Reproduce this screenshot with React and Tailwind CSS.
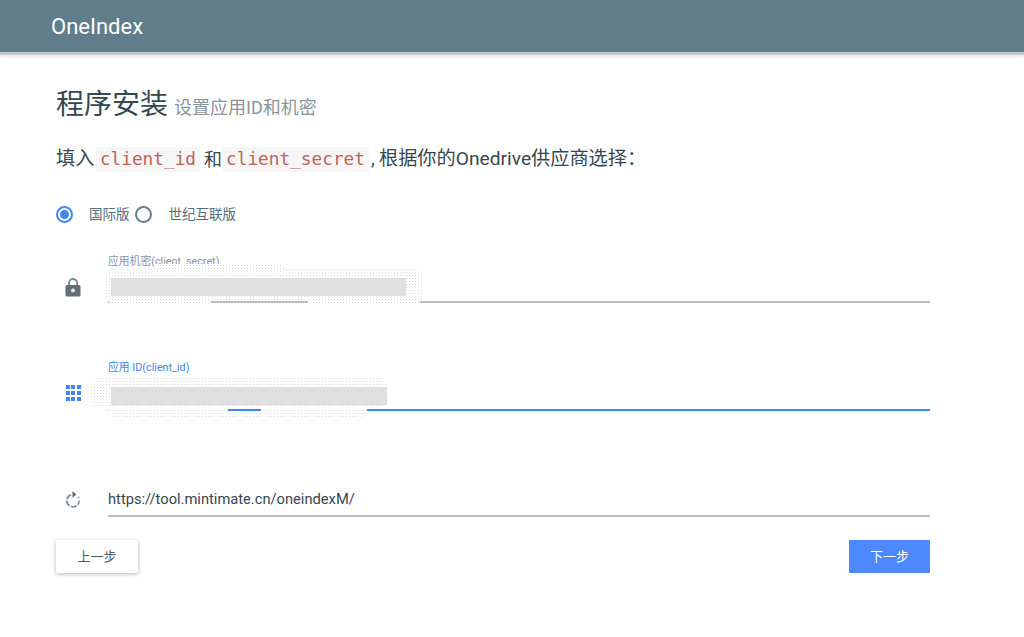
const cjk = '"Roboto","Noto Sans CJK SC",sans-serif';
const mono = '"DejaVu Sans Mono","Liberation Mono",monospace';

function Lock() {
  return (
    <svg width="16" height="20" viewBox="0 0 16 20" className="block mb-[6px]">
      <path d="M4 9V6a4 4 0 0 1 8 0v3" fill="none" stroke="#78909c" strokeWidth="2" />
      <rect x="0.5" y="8" width="15" height="11.5" rx="1.5" fill="#5f6f78" />
      <circle cx="8" cy="13.5" r="2" fill="#f5e6e6" />
      <circle cx="3" cy="10.5" r="0.8" fill="#b9605a" />
      <circle cx="13" cy="10.5" r="0.8" fill="#b9605a" />
      <circle cx="3" cy="17" r="0.8" fill="#b9605a" />
      <circle cx="13" cy="17" r="0.8" fill="#b9605a" />
    </svg>
  );
}

function Grid() {
  return (
    <div className="grid grid-cols-3 gap-x-[1.5px] gap-y-[2px] w-[15px] mb-[10px] ml-[0.5px]">
      {Array.from({ length: 9 }).map((_, i) => (
        <div key={i} className="w-[4px] h-[4px] bg-[#4285f4]" />
      ))}
    </div>
  );
}

function Refresh() {
  return (
    <svg width="16" height="18" viewBox="0 0 16 18" fill="none" className="block mb-[8px]">
      <path d="M6 3.8a6.2 6.2 0 1 0 8.2 5.9" stroke="#78909c" strokeWidth="1.7" strokeDasharray="6 1.4" />
      <path d="M7.5 0l3.8 3.5L7.5 7z" fill="#5f6f78" />
      <circle cx="13.6" cy="6.3" r="0.9" fill="#78909c" />
    </svg>
  );
}

function Blob({ className, gray }) {
  return (
    <div className={`absolute bg-white rounded-[10px] ${className}`}>
      <div className="absolute inset-0 rounded-[10px] bg-[radial-gradient(#dcdcdc_0.6px,transparent_0.8px)] bg-[length:3px_3px]" />
      {gray && <div className={`absolute bg-[#dfe0e2] ${gray}`} />}
    </div>
  );
}

function Row({ icon, label, labelClass, lineClass, height, children }) {
  return (
    <div className="flex items-end" style={{ height }}>
      <div className="w-[52px] pl-[9px] flex items-end h-[32px]">{icon}</div>
      <div className={`relative w-[822px] h-full border-b-[2px] ${lineClass}`}>
        {label && <div className={`absolute left-0 top-0 text-[10.8px] leading-[12px] ${labelClass}`}>{label}</div>}
        {children}
      </div>
    </div>
  );
}

export default function App() {
  return (
    <div className="min-h-[637px] bg-white text-[#37474f]" style={{ fontFamily: cjk }}>
      <header className="h-[52px] bg-[#607d8b] shadow-[0_3px_0_#c8c8c8,0_6px_2px_#eeeeee] flex items-center pl-[51px] text-white text-[22px]">
        OneIndex
      </header>
      <main className="pl-[56px]">
        <h1 className="mt-[33px] h-[40px] flex items-baseline font-normal text-[28px] leading-[40px] text-[#37474f]">
          程序安装
          <span className="ml-[6px] text-[18px] text-[#8a959c]">设置应用ID和机密</span>
        </h1>
        <p className="mt-[20px] h-[28px] flex items-center text-[19.2px] text-[#37474f] whitespace-pre">
          填入
          <code className="ml-[1.5px] px-[4px] bg-[#f6f6f6] text-[#c0635a] text-[17.75px] leading-[25px]" style={{ fontFamily: mono }}>client_id</code>
          <span className="ml-[4px] text-[18px]">和</span>
          <code className="px-[4px] bg-[#f6f6f6] text-[#c0635a] text-[17.75px] leading-[25px]" style={{ fontFamily: mono }}>client_secret</code>
          <span className="ml-[2px] w-[8px]">,</span>
          <span>根据你的Onedrive供应商选择：</span>
        </p>
        <div className="mt-[31px] h-[20px] flex items-center text-[13.5px] text-[#546e7a]">
          <span className="w-[17px] h-[17px] rounded-full border-[2px] border-[#4285f4] flex items-center justify-center">
            <span className="w-[9px] h-[9px] rounded-full bg-[#4285f4]" />
          </span>
          <span className="ml-[16px]">国际版</span>
          <span className="ml-[5px] w-[17px] h-[17px] rounded-full border-[2px] border-[#6b7f8a]" />
          <span className="ml-[17px]">世纪互联版</span>
        </div>

        <div className="mt-[32px]">
          <Row icon={<Lock />} height="47px" label="应用机密(client_secret)" labelClass="text-[#8a959c]" lineClass="border-[#bdbdbd]">
            <Blob className="left-[-3px] top-[12px] w-[319px] h-[36px]" gray="left-[6px] top-[10px] w-[295px] h-[18px]" />
            <Blob className="left-[45px] top-[8px] w-[130px] h-[10px]" />
            <div className="absolute left-[103px] bottom-[-2px] w-[97px] h-[2px] bg-[#bdbdbd]" />
          </Row>
          <div className="h-[59px]" />
          <Row icon={<Grid />} height="49px" label="应用 ID(client_id)" labelClass="text-[#4285f4]" lineClass="border-[#4285f4]">
            <Blob className="left-[0px] top-[38px] w-[259px] h-[18px]" />
            <Blob className="left-[-18px] top-[15px] w-[297px] h-[31px]" gray="left-[21px] top-[10px] w-[276px] h-[18px]" />
            <div className="absolute left-[120px] bottom-[-2px] w-[33px] h-[2px] bg-[#4285f4]" />
          </Row>
          <div className="h-[64px]" />
          <Row icon={<Refresh />} height="42px" lineClass="border-[#bdbdbd]">
            <div className="absolute left-0 bottom-[6px] text-[14.7px] leading-[20px] text-[#37474f]">https://tool.mintimate.cn/oneindexM/</div>
          </Row>
        </div>

        <div className="mt-[23px] w-[874px] flex justify-between">
          <button className="w-[82px] h-[33px] bg-white rounded-[2px] text-[13px] text-[#4b5b63] shadow-[0_1px_4px_rgba(0,0,0,0.3)]">上一步</button>
          <button className="w-[81px] h-[33px] bg-[#4d88ff] rounded-[1px] text-[13px] text-white">下一步</button>
        </div>
      </main>
    </div>
  );
}
